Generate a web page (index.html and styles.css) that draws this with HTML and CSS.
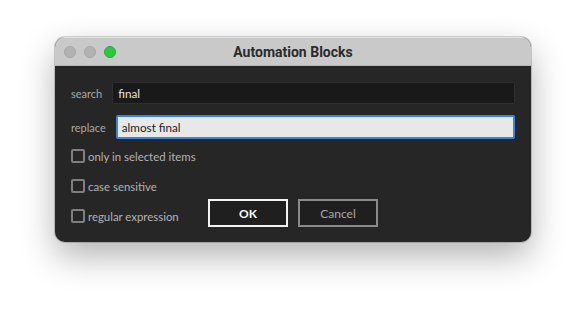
FILE: index.html
```html
<!DOCTYPE html>
<html lang="en">
<head>
    <meta charset="UTF-8">
    <title>Automation Blocks</title>
    <link rel="stylesheet" href="styles.css">
</head>
<body>
    <div class="stage">
        <div class="window">
            <div class="titlebar">
                <div class="lights">
                    <span class="light"></span>
                    <span class="light"></span>
                    <span class="light green"></span>
                </div>
                <div class="title">Automation Blocks</div>
                <div></div>
            </div>

            <div class="content">
                <div class="field-row">
                    <span class="field-label">search</span>
                    <div class="input dark">final</div>
                </div>
                <div class="field-row">
                    <span class="field-label">replace</span>
                    <div class="input light-input">almost final</div>
                </div>

                <div class="lower">
                    <div class="options">
                        <label class="option"><span class="box"></span>only in selected items</label>
                        <label class="option"><span class="box"></span>case sensitive</label>
                        <label class="option"><span class="box"></span>regular expression</label>
                    </div>
                    <div class="buttons">
                        <button class="btn primary">OK</button>
                        <button class="btn">Cancel</button>
                    </div>
                </div>
            </div>
        </div>
    </div>
</body>
</html>
```

FILE: styles.css
```css
* {
    box-sizing: border-box;
    margin: 0;
    padding: 0;
}

body {
    background: #ffffff;
    font-family: Lato, "Open Sans", sans-serif;
    width: 587px;
    height: 316px;
    overflow: hidden;
}

.stage {
    padding: 37px 0 0 55px;
}

.window {
    width: 476px;
    height: 205px;
    border-radius: 10px;
    overflow: hidden;
    background: #262626;
    box-shadow: 0 14px 34px rgba(0,0,0,0.3), 0 0 0 1px rgba(0,0,0,0.16);
    display: flex;
    flex-direction: column;
}

.titlebar {
    height: 29px;
    background: #c9c9c9;
    border-top: 1px solid #e2e2e2;
    border-bottom: 1px solid #b4b4b4;
    display: grid;
    grid-template-columns: 1fr auto 1fr;
    align-items: center;
}

.lights {
    display: flex;
    gap: 8px;
    padding-left: 9px;
}

.light {
    width: 12px;
    height: 12px;
    border-radius: 50%;
    background: #b3b3b3;
    border: 1px solid #a6a6a6;
}

.light.green {
    background: #2ac940;
    border-color: #22b035;
}

.title {
    font-family: Roboto, sans-serif;
    font-weight: 700;
    font-size: 14px;
    color: #2b2b2b;
}

.content {
    flex: 1;
    padding: 16px 16px 19px 16px;
    display: flex;
    flex-direction: column;
}

.field-row {
    display: flex;
    align-items: center;
    gap: 10px;
    margin-bottom: 11px;
}

.field-label {
    font-size: 11px;
    color: #a9a9a9;
}

.input {
    flex: 1;
    font-size: 11.7px;
    display: flex;
    align-items: center;
    border-radius: 2px;
}

.input.dark {
    height: 22px;
    background: #191919;
    border: 1px solid #2f2f2f;
    color: #e4e4e4;
    padding-left: 5px;
}

.input.light-input {
    height: 24px;
    background: #e8e8e8;
    border: 2px solid #3a84dc;
    color: #1c1c1c;
    padding-left: 4px;
}

.lower {
    display: flex;
    margin-top: -1px;
}

.options {
    width: 137px;
    display: flex;
    flex-direction: column;
    gap: 16px;
}

.option {
    display: flex;
    align-items: center;
    gap: 3px;
    height: 14px;
    font-size: 11.4px;
    color: #b3b3b3;
    white-space: nowrap;
}

.box {
    width: 14px;
    height: 14px;
    border: 2px solid #7f7f7f;
    border-radius: 2px;
    flex-shrink: 0;
}

.buttons {
    align-self: flex-end;
    margin-bottom: -4px;
    display: flex;
    gap: 10px;
}

.btn {
    width: 80px;
    height: 28px;
    background: #1f1f1f;
    border: 2px solid #8a8a8a;
    color: #a8a8a8;
    font-family: Lato, sans-serif;
    font-size: 12px;
}

.btn.primary {
    border-color: #f2f2f2;
    color: #ffffff;
    font-weight: 700;
}
```
